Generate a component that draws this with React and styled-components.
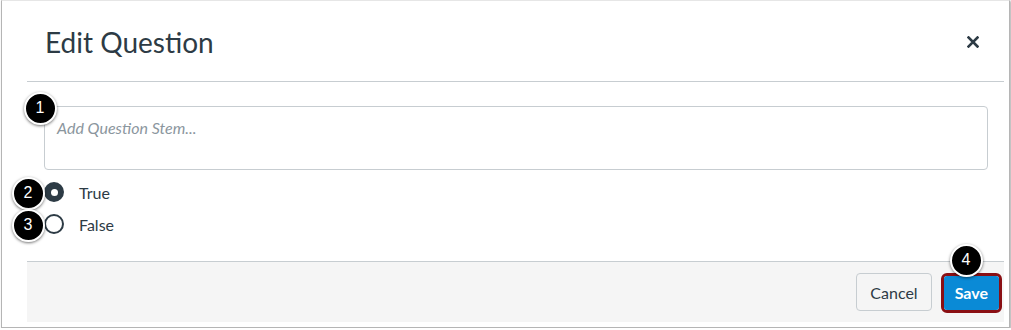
import styled, { createGlobalStyle } from "styled-components";

const GlobalStyle = createGlobalStyle`
  html, body {
    margin: 0;
    padding: 0;
    background: #ffffff;
  }
  body {
    font-family: Lato, "Liberation Sans", sans-serif;
    color: #2d3b45;
  }
`;

const Frame = styled.div`
  position: relative;
  box-sizing: border-box;
  width: 1009px;
  height: 328px;
  margin-left: 1px;
  background: #ffffff;
  border: 1px solid #b5b5b5;
  border-top-color: #e6e6e6;
  box-shadow: 1px 1px 2px rgba(0, 0, 0, 0.35);
  padding: 0 5px 5px 25px;
  display: flex;
  flex-direction: column;
`;

const Header = styled.div`
  height: 80px;
  border-bottom: 1px solid #c7cdd1;
  display: flex;
  align-items: center;
  justify-content: space-between;
  padding: 0 25px 0 18px;
`;

const Title = styled.h2`
  margin: 0;
  padding-top: 2px;
  font-size: 28px;
  font-weight: 400;
  color: #2d3b45;
`;

const CloseButton = styled.button`
  border: 0;
  background: none;
  padding: 0;
  display: flex;
  cursor: pointer;
  margin-top: 1px;
`;

const Body = styled.div`
  flex: 1;
  padding: 24px 16px 0 17px;
`;

const StemInput = styled.div`
  box-sizing: border-box;
  height: 64px;
  border: 1px solid #c7cdd1;
  border-radius: 4px;
  padding: 11px 12px;
  font-size: 16px;
  font-style: italic;
  color: #8b969e;
`;

const Options = styled.div`
  margin-top: 6px;
  display: flex;
  flex-direction: column;
`;

const OptionRow = styled.label`
  height: 32px;
  display: flex;
  align-items: center;
  gap: 15px;
  font-size: 16px;
  color: #2d3b45;
`;

const Radio = styled.span`
  box-sizing: border-box;
  width: 20px;
  height: 20px;
  border-radius: 50%;
  border: 2px solid #2d3b45;
  background: ${(props) => (props.checked ? "#2d3b45" : "#ffffff")};
  display: flex;
  align-items: center;
  justify-content: center;
  &::after {
    content: "";
    width: 7px;
    height: 7px;
    border-radius: 50%;
    background: #ffffff;
    display: ${(props) => (props.checked ? "block" : "none")};
  }
`;

const Footer = styled.div`
  height: 60px;
  background: #f5f5f5;
  border-top: 1px solid #c7cdd1;
  display: flex;
  align-items: center;
  justify-content: flex-end;
  gap: 9px;
  padding: 0 2px 0 0;
`;

const CancelButton = styled.button`
  box-sizing: border-box;
  height: 38px;
  padding: 0 13px;
  font-family: inherit;
  font-size: 16px;
  color: #2d3b45;
  background: #f5f5f5;
  border: 1px solid #c7cdd1;
  border-radius: 4px;
  margin-top: 0;
`;

const Highlight = styled.div`
  box-sizing: border-box;
  border: 3px solid #8a0f14;
  border-radius: 6px;
  display: flex;
  margin-top: 1px;
`;

const SaveButton = styled.button`
  box-sizing: border-box;
  height: 34px;
  padding: 0 11px;
  font-family: inherit;
  font-size: 16px;
  font-weight: 700;
  color: #ffffff;
  background: #0a8ad6;
  border: 0;
  border-radius: 3px;
`;

const Badge = styled.span`
  position: absolute;
  box-sizing: border-box;
  width: 33px;
  height: 33px;
  border-radius: 50%;
  background: #000000;
  border: 2px solid #ffffff;
  box-shadow: 0 1px 3px rgba(0, 0, 0, 0.55);
  color: #ffffff;
  font-family: "Liberation Sans", Arial, sans-serif;
  font-size: 16px;
  display: flex;
  align-items: center;
  justify-content: center;
  left: ${(props) => props.x - 16.5}px;
  top: ${(props) => props.y - 16.5}px;
`;

function CloseIcon() {
  return (
    <svg width="12" height="12" viewBox="0 0 12 12">
      <path
        d="M1.5 1.5 L10.5 10.5 M10.5 1.5 L1.5 10.5"
        stroke="#2d3b45"
        strokeWidth="2.6"
        strokeLinecap="square"
      />
    </svg>
  );
}

const options = [
  { label: "True", checked: true },
  { label: "False", checked: false },
];

const badges = [
  { n: 1, x: 39, y: 107 },
  { n: 2, x: 27, y: 192 },
  { n: 3, x: 27, y: 224 },
  { n: 4, x: 965, y: 259 },
];

export default function App() {
  return (
    <>
      <GlobalStyle />
      <Frame>
        <Header>
          <Title>Edit Question</Title>
          <CloseButton aria-label="Close">
            <CloseIcon />
          </CloseButton>
        </Header>
        <Body>
          <StemInput>Add Question Stem...</StemInput>
          <Options>
            {options.map((o) => (
              <OptionRow key={o.label}>
                <Radio checked={o.checked} />
                {o.label}
              </OptionRow>
            ))}
          </Options>
        </Body>
        <Footer>
          <CancelButton>Cancel</CancelButton>
          <Highlight>
            <SaveButton>Save</SaveButton>
          </Highlight>
        </Footer>
        {badges.map((b) => (
          <Badge key={b.n} x={b.x - 1} y={b.y}>
            {b.n}
          </Badge>
        ))}
      </Frame>
    </>
  );
}
